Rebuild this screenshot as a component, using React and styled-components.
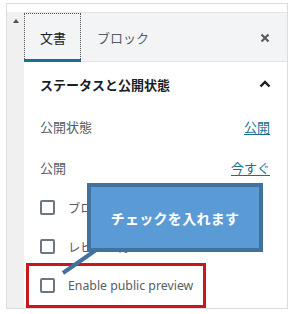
import styled, { createGlobalStyle } from "styled-components";

const GlobalStyle = createGlobalStyle`
  html, body {
    margin: 0;
    padding: 0;
    background: #fff;
  }
  body {
    font-family: "Noto Sans", "Noto Sans CJK JP", sans-serif;
    color: #32373c;
  }
`;

const Stage = styled.div`
  position: relative;
  width: 293px;
  height: 314px;
  padding: 3px 0 0 6px;
  box-sizing: border-box;
`;

const Frame = styled.div`
  width: 282px;
  height: 306px;
  box-sizing: border-box;
  border: 1px solid #dcdcde;
  padding-top: 8px;
  display: flex;
`;

const ScrollColumn = styled.div`
  width: 17px;
  background: #f0f0f0;
  display: flex;
  justify-content: center;
  padding-top: 7px;
  box-sizing: border-box;
`;

const UpArrow = styled.div`
  width: 0;
  height: 0;
  border-left: 3.5px solid transparent;
  border-right: 3.5px solid transparent;
  border-bottom: 4px solid #505050;
`;

const Panel = styled.div`
  flex: 1;
  display: flex;
  flex-direction: column;
  background: #fff;
`;

const TabBar = styled.div`
  height: 50px;
  box-sizing: border-box;
  display: flex;
  align-items: stretch;
  background: #f3f4f5;
  border-top: 1px solid #e2e4e7;
  border-bottom: 1px solid #e2e4e7;
`;

const Tab = styled.div`
  position: relative;
  display: flex;
  align-items: center;
  padding: 0 15px 0 16px;
  font-size: 13px;
  color: ${(p) => (p.$active ? "#191e23" : "#555d66")};
  outline: ${(p) => (p.$active ? "1px dotted #555" : "none")};
  outline-offset: -1px;
  &::after {
    content: "";
    display: ${(p) => (p.$active ? "block" : "none")};
    position: absolute;
    left: 0;
    right: 0;
    bottom: -1px;
    height: 3px;
    background: #1a6f8e;
  }
`;

const CloseButton = styled.div`
  margin-left: auto;
  width: 44px;
  display: flex;
  align-items: center;
  justify-content: center;
  padding-top: 2px;
`;

const SectionHeader = styled.div`
  height: 44px;
  display: flex;
  align-items: center;
  justify-content: space-between;
  padding: 0 16px 0 16px;
  font-size: 13px;
  font-weight: 600;
  color: #191e23;
`;

const Row = styled.div`
  height: 41px;
  display: flex;
  align-items: center;
  justify-content: space-between;
  padding: 0 17px 0 16px;
  font-size: 13px;
  color: #555d66;
`;

const LinkText = styled.span`
  color: #1a6f8e;
  text-decoration: underline;
  text-underline-offset: 2px;
`;

const CheckRow = styled.label`
  height: 39px;
  display: flex;
  align-items: center;
  gap: 13px;
  padding-left: 16px;
  font-size: 12.3px;
  color: #555d66;
`;

const Box = styled.span`
  width: 15px;
  height: 15px;
  box-sizing: border-box;
  border: 2px solid #6c7781;
  border-radius: 2px;
  background: #fff;
  flex-shrink: 0;
`;

const Highlight = styled.div`
  position: absolute;
  left: 26px;
  top: 263px;
  width: 180px;
  height: 45px;
  box-sizing: border-box;
  border: 3px solid #c8171e;
`;

const Callout = styled.div`
  position: absolute;
  left: 87px;
  top: 183px;
  width: 176px;
  height: 69px;
  box-sizing: border-box;
  background: #5b9bd5;
  border: 4px solid #41719c;
  display: flex;
  align-items: center;
  justify-content: center;
  color: #fff;
  font-size: 14px;
  font-weight: 700;
  font-family: "Noto Sans CJK JP", sans-serif;
  letter-spacing: 0.3px;
`;

const Tail = styled.svg`
  position: absolute;
  left: 58px;
  top: 246px;
`;

function CloseIcon() {
  return (
    <svg width="10" height="10" viewBox="0 0 10 10">
      <path d="M1.5 1.5 L8.5 8.5 M8.5 1.5 L1.5 8.5" stroke="#555d66" strokeWidth="2.2" />
    </svg>
  );
}

function ChevronUp() {
  return (
    <svg width="12" height="8" viewBox="0 0 12 8">
      <path d="M1.5 6.5 L6 2 L10.5 6.5" stroke="#191e23" strokeWidth="2.4" fill="none" />
    </svg>
  );
}

export default function App() {
  return (
    <>
      <GlobalStyle />
      <Stage>
        <Frame>
          <ScrollColumn>
            <UpArrow />
          </ScrollColumn>
          <Panel>
            <TabBar>
              <Tab $active>文書</Tab>
              <Tab>ブロック</Tab>
              <CloseButton>
                <CloseIcon />
              </CloseButton>
            </TabBar>
            <SectionHeader>
              ステータスと公開状態
              <ChevronUp />
            </SectionHeader>
            <Row>
              公開状態
              <LinkText>公開</LinkText>
            </Row>
            <Row>
              公開
              <LinkText>今すぐ</LinkText>
            </Row>
            <CheckRow>
              <Box />
              ブログのトップに固定
            </CheckRow>
            <CheckRow>
              <Box />
              レビュー待ち
            </CheckRow>
            <CheckRow>
              <Box />
              Enable public preview
            </CheckRow>
          </Panel>
        </Frame>
        <Highlight />
        <Tail width="44" height="34" viewBox="0 0 44 34">
          <line x1="38" y1="4" x2="5" y2="27" stroke="#41719c" strokeWidth="4" />
        </Tail>
        <Callout>チェックを入れます</Callout>
      </Stage>
    </>
  );
}
